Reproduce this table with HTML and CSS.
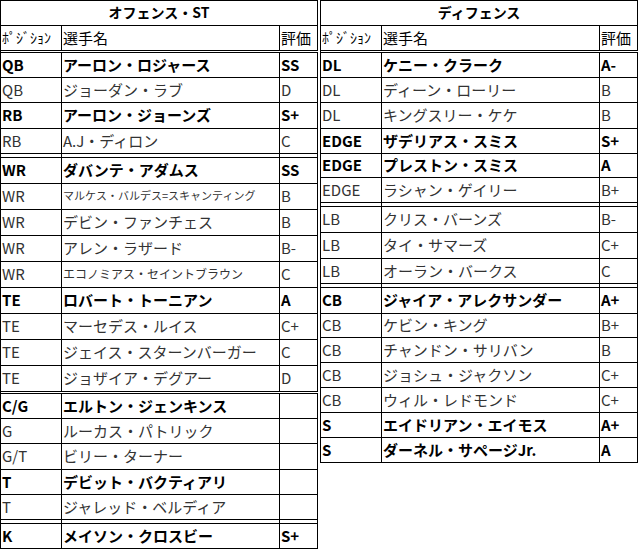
FILE: index.html
```html
<!DOCTYPE html>
<html lang="ja">
<head>
<meta charset="utf-8">
<title>ロースター</title>
<link rel="stylesheet" href="styles.css">
</head>
<body>
<div class="sheet">
  <div class="roster">
    <div class="row h25"><div class="cell full">オフェンス・ST</div></div>
    <div class="row head"><div class="cell pos kana">ﾎﾟｼﾞｼｮﾝ</div><div class="cell name">選手名</div><div class="cell grade">評価</div></div>
    <div class="row b h25"><div class="cell pos">QB</div><div class="cell name">アーロン・ロジャース</div><div class="cell grade">SS</div></div>
    <div class="row h25"><div class="cell pos">QB</div><div class="cell name">ジョーダン・ラブ</div><div class="cell grade">D</div></div>
    <div class="row b h26"><div class="cell pos">RB</div><div class="cell name">アーロン・ジョーンズ</div><div class="cell grade">S+</div></div>
    <div class="row h25"><div class="cell pos">RB</div><div class="cell name">A.J・ディロン</div><div class="cell grade">C</div></div>
    <div class="row sep"><div class="cell pos"></div><div class="cell name"></div><div class="cell grade"></div></div>
    <div class="row b h26"><div class="cell pos">WR</div><div class="cell name">ダバンテ・アダムス</div><div class="cell grade">SS</div></div>
    <div class="row h26"><div class="cell pos">WR</div><div class="cell name s11">マルケス・バルデス=スキャンティング</div><div class="cell grade">B</div></div>
    <div class="row h26"><div class="cell pos">WR</div><div class="cell name">デビン・ファンチェス</div><div class="cell grade">B</div></div>
    <div class="row h26"><div class="cell pos">WR</div><div class="cell name">アレン・ラザード</div><div class="cell grade">B-</div></div>
    <div class="row h26"><div class="cell pos">WR</div><div class="cell name s12">エコノミアス・セイントブラウン</div><div class="cell grade">C</div></div>
    <div class="row b h26"><div class="cell pos">TE</div><div class="cell name">ロバート・トーニアン</div><div class="cell grade">A</div></div>
    <div class="row h26"><div class="cell pos">TE</div><div class="cell name">マーセデス・ルイス</div><div class="cell grade">C+</div></div>
    <div class="row h26"><div class="cell pos">TE</div><div class="cell name">ジェイス・スターンバーガー</div><div class="cell grade">C</div></div>
    <div class="row dbl h28"><div class="cell pos">TE</div><div class="cell name">ジョザイア・デグアー</div><div class="cell grade">D</div></div>
    <div class="row b h25"><div class="cell pos">C/G</div><div class="cell name">エルトン・ジェンキンス</div><div class="cell grade"></div></div>
    <div class="row h25"><div class="cell pos">G</div><div class="cell name">ルーカス・パトリック</div><div class="cell grade"></div></div>
    <div class="row h26"><div class="cell pos">G/T</div><div class="cell name">ビリー・ターナー</div><div class="cell grade"></div></div>
    <div class="row b h25"><div class="cell pos">T</div><div class="cell name">デビット・バクティアリ</div><div class="cell grade"></div></div>
    <div class="row h25"><div class="cell pos">T</div><div class="cell name">ジャレッド・ベルディア</div><div class="cell grade"></div></div>
    <div class="row sep"><div class="cell pos"></div><div class="cell name"></div><div class="cell grade"></div></div>
    <div class="row b h25"><div class="cell pos">K</div><div class="cell name">メイソン・クロスビー</div><div class="cell grade">S+</div></div>
  </div>

  <div class="roster">
    <div class="row h25"><div class="cell full">ディフェンス</div></div>
    <div class="row head"><div class="cell pos kana">ﾎﾟｼﾞｼｮﾝ</div><div class="cell name">選手名</div><div class="cell grade">評価</div></div>
    <div class="row b h25"><div class="cell pos">DL</div><div class="cell name">ケニー・クラーク</div><div class="cell grade">A-</div></div>
    <div class="row h25"><div class="cell pos">DL</div><div class="cell name">ディーン・ローリー</div><div class="cell grade">B</div></div>
    <div class="row h26"><div class="cell pos">DL</div><div class="cell name">キングスリー・ケケ</div><div class="cell grade">B</div></div>
    <div class="row b h25"><div class="cell pos">EDGE</div><div class="cell name">ザデリアス・スミス</div><div class="cell grade">S+</div></div>
    <div class="row b h24"><div class="cell pos">EDGE</div><div class="cell name">プレストン・スミス</div><div class="cell grade">A</div></div>
    <div class="row h25"><div class="cell pos">EDGE</div><div class="cell name">ラシャン・ゲイリー</div><div class="cell grade">B+</div></div>
    <div class="row sep"><div class="cell pos"></div><div class="cell name"></div><div class="cell grade"></div></div>
    <div class="row h26"><div class="cell pos">LB</div><div class="cell name">クリス・バーンズ</div><div class="cell grade">B-</div></div>
    <div class="row h26"><div class="cell pos">LB</div><div class="cell name">タイ・サマーズ</div><div class="cell grade">C+</div></div>
    <div class="row h25"><div class="cell pos">LB</div><div class="cell name">オーラン・バークス</div><div class="cell grade">C</div></div>
    <div class="row sep"><div class="cell pos"></div><div class="cell name"></div><div class="cell grade"></div></div>
    <div class="row b h26"><div class="cell pos">CB</div><div class="cell name">ジャイア・アレクサンダー</div><div class="cell grade">A+</div></div>
    <div class="row h24"><div class="cell pos">CB</div><div class="cell name">ケビン・キング</div><div class="cell grade">B+</div></div>
    <div class="row h25"><div class="cell pos">CB</div><div class="cell name">チャンドン・サリバン</div><div class="cell grade">B</div></div>
    <div class="row h25"><div class="cell pos">CB</div><div class="cell name">ジョシュ・ジャクソン</div><div class="cell grade">C+</div></div>
    <div class="row h25"><div class="cell pos">CB</div><div class="cell name">ウィル・レドモンド</div><div class="cell grade">C+</div></div>
    <div class="row b h25"><div class="cell pos">S</div><div class="cell name">エイドリアン・エイモス</div><div class="cell grade">A+</div></div>
    <div class="row b h25"><div class="cell pos">S</div><div class="cell name">ダーネル・サページJr.</div><div class="cell grade">A</div></div>
  </div>
</div>
</body>
</html>
```

FILE: styles.css
```css
* {
  box-sizing: border-box;
}

body {
  margin: 0;
  background: #ffffff;
  font-family: "Noto Sans CJK JP", "Noto Sans", sans-serif;
  color: #333333;
}

.sheet {
  display: flex;
  align-items: flex-start;
  gap: 2px;
}

.roster {
  width: 318px;
  display: flex;
  flex-direction: column;
  border-left: 1px solid #000;
  border-top: 1px solid #000;
}

.row {
  display: flex;
  border-bottom: 1px solid #000;
}

.cell {
  display: flex;
  align-items: center;
  border-right: 1px solid #000;
  padding-bottom: 2px;
  font-size: 15px;
  line-height: 1;
  white-space: nowrap;
  overflow: hidden;
}

.sep .cell {
  padding-bottom: 0;
}

.pos {
  width: 61px;
  padding-left: 1px;
}

.name {
  width: 218px;
  padding-left: 1px;
}

.grade {
  width: 38px;
  padding-left: 1px;
}

.full {
  width: 317px;
  justify-content: center;
  font-size: 14px;
  font-weight: 700;
  color: #000;
}

.head {
  height: 27px;
  border-bottom: 3px double #000;
  color: #000;
}

.kana {
  font-size: 14px;
}

.dbl {
  border-bottom: 3px double #000;
}

.b .cell {
  font-weight: 700;
  color: #000;
}

.s11 {
  font-size: 11px;
}

.s12 {
  font-size: 12px;
}

.sep {
  height: 4px;
}

.h24 { height: 24px; }
.h25 { height: 25px; }
.h26 { height: 26px; }
.h28 { height: 28px; }
```
